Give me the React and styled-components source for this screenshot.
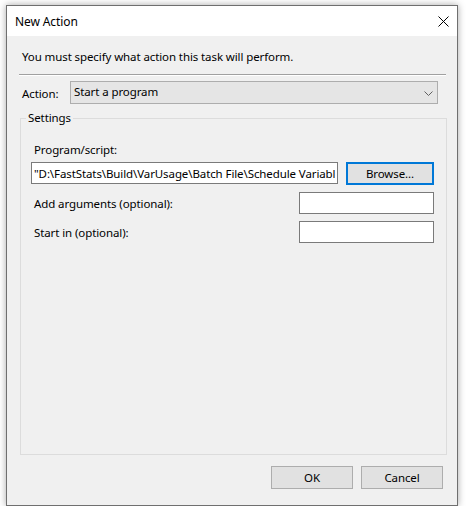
import React from 'react';
import styled, { createGlobalStyle } from 'styled-components';

const GlobalStyle = createGlobalStyle`
    html, body {
        margin: 0;
        padding: 0;
        background: #ffffff;
    }
    body {
        font-family: "Noto Sans", "Open Sans", sans-serif;
        font-size: 11.5px;
        letter-spacing: -0.1px;
        color: #000;
    }
`

const App = () => {
    return (
        <>
            <GlobalStyle/>
            <Window>
                <TitleBar>
                    <Title>New Action</Title>
                    <CloseButton>
                        <svg width="11" height="11" viewBox="0 0 11 11">
                            <path d="M0.5 0.5 L10.5 10.5 M10.5 0.5 L0.5 10.5" stroke="#000" strokeWidth="1" fill="none"/>
                        </svg>
                    </CloseButton>
                </TitleBar>
                <Body>
                    <Intro>You must specify what action this task will perform.</Intro>
                    <Separator/>
                    <ActionRow>
                        <ActionLabel>Action:</ActionLabel>
                        <Combo>
                            <span>Start a program</span>
                            <svg width="9" height="5" viewBox="0 0 9 5">
                                <path d="M0.5 0.5 L4.5 4.5 L8.5 0.5" stroke="#606060" strokeWidth="1" fill="none"/>
                            </svg>
                        </Combo>
                    </ActionRow>
                    <Group>
                        <Legend>Settings</Legend>
                        <GroupInner>
                            <FieldLabel>Program/script:</FieldLabel>
                            <Row $top={4}>
                                <TextBox
                                    $width={307}
                                    readOnly
                                    value={'"D:\\FastStats\\Build\\VarUsage\\Batch File\\Schedule Variable Usage.bat"'}
                                />
                                <Button $focused $width={88}>Browse...</Button>
                            </Row>
                            <Row $top={7}>
                                <RowLabel>Add arguments (optional):</RowLabel>
                                <TextBox $width={135} readOnly value=""/>
                            </Row>
                            <Row $top={7}>
                                <RowLabel>Start in (optional):</RowLabel>
                                <TextBox $width={135} readOnly value=""/>
                            </Row>
                        </GroupInner>
                    </Group>
                    <Footer>
                        <Button $width={82}>OK</Button>
                        <Button $width={82}>Cancel</Button>
                    </Footer>
                </Body>
            </Window>
        </>
    );
}

const Window = styled.div`
    box-sizing: border-box;
    width: 452px;
    height: 501px;
    margin: 5px 0 0 6px;
    border: 1px solid #6f6f6f;
    box-shadow: 0 0 7px rgba(0, 0, 0, 0.35);
    display: flex;
    flex-direction: column;
    background: #f0f0f0;
`

const TitleBar = styled.div`
    height: 30px;
    background: #ffffff;
    display: flex;
    align-items: center;
    justify-content: space-between;
    padding: 0 8px 0 8px;
`

const Title = styled.div`
    font-size: 12px;
    line-height: 16px;
    margin-top: 1px;
`

const CloseButton = styled.div`
    width: 11px;
    height: 11px;
    margin-top: 1px;
    display: flex;
`

const Body = styled.div`
    flex: 1;
    display: flex;
    flex-direction: column;
    background: #f0f0f0;
`

const Intro = styled.div`
    padding: 13px 0 0 15px;
    line-height: 16px;
`

const Separator = styled.div`
    margin: 9px 0 0 12px;
    width: 427px;
    height: 1px;
    background: #a0a0a0;
    border-bottom: 1px solid #ffffff;
`

const ActionRow = styled.div`
    display: flex;
    align-items: center;
    margin-top: 5px;
    padding-left: 15px;
    height: 23px;
`

const ActionLabel = styled.div`
    width: 48px;
    line-height: 16px;
    margin-top: 3px;
`

const Combo = styled.div`
    box-sizing: border-box;
    width: 368px;
    height: 23px;
    background: #e5e5e5;
    border: 1px solid #adadad;
    display: flex;
    align-items: center;
    justify-content: space-between;
    padding: 0 4px 0 3px;
    line-height: 16px;

    span {
        margin-top: -1px;
    }
    svg {
        margin-top: 1px;
    }
`

const Group = styled.fieldset`
    flex: 1;
    margin: 6px 0 0 13px;
    width: 427px;
    box-sizing: border-box;
    padding: 0;
    border: 1px solid #dcdcdc;
    min-width: 0;
`

const Legend = styled.legend`
    margin-left: 5px;
    padding: 0 2px;
    line-height: 16px;
`

const GroupInner = styled.div`
    padding: 16px 0 0 10px;
    width: 403px;
`

const FieldLabel = styled.div`
    padding-left: 3px;
    line-height: 16px;
`

const Row = styled.div`
    display: flex;
    justify-content: space-between;
    align-items: flex-start;
    margin-top: ${p => p.$top}px;
`

const RowLabel = styled.div`
    padding-left: 3px;
    margin-top: 4px;
    line-height: 16px;
`

const TextBox = styled.input`
    box-sizing: border-box;
    width: ${p => p.$width}px;
    height: 22px;
    border: 1px solid #7a7a7a;
    background: #ffffff;
    padding: 0 2px;
    margin: 0;
    font: inherit;
    letter-spacing: inherit;
    color: #000;
    outline: none;
`

const Button = styled.div`
    box-sizing: border-box;
    width: ${p => p.$width}px;
    height: 23px;
    background: #e1e1e1;
    border: ${p => p.$focused ? '2px solid #0078d7' : '1px solid #adadad'};
    display: flex;
    align-items: center;
    justify-content: center;
    line-height: 16px;
`

const Footer = styled.div`
    display: flex;
    justify-content: flex-end;
    gap: 8px;
    margin-top: 11px;
    padding: 0 14px 16px 0;
`

export default App;
